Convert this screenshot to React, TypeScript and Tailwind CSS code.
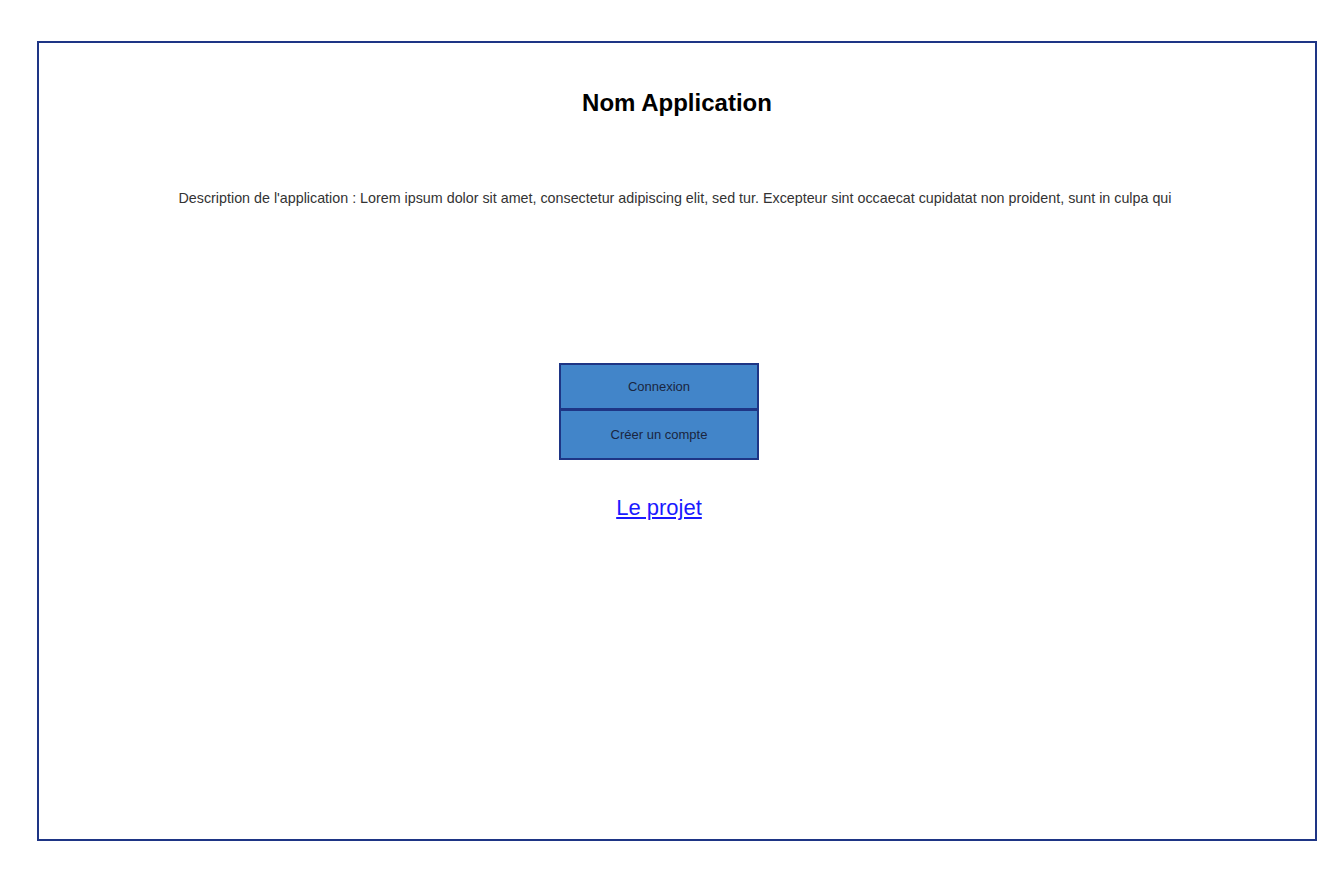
import React from "react";

export default function App() {
  return (
    <div className="min-h-[876px] bg-white pl-[37px] pt-[41px] font-['Liberation_Sans',Arial,sans-serif]">
      <div className="w-[1280px] h-[800px] border-2 border-[#1e3585] flex flex-col">
        {/* header */}
        <h1 className="mt-[46px] text-center text-[24px] leading-[28px] font-bold text-black">
          Nom Application
        </h1>
        <p className="mt-[73px] pr-[4px] text-center text-[14.3px] leading-[16px] text-[#333333]">
          Description de l'application : Lorem ipsum dolor sit amet, consectetur adipiscing elit, sed tur. Excepteur sint occaecat cupidatat non proident, sunt in culpa qui
        </p>

        {/* actions */}
        <div className="mt-[157px] flex flex-col items-center pr-[36px]">
          <button className="w-[200px] h-[47px] border-2 border-[#1e3585] bg-[#4285c9] text-[13px] text-[#1a2540]">
            Connexion
          </button>
          <button className="-mt-px w-[200px] h-[51px] border-2 border-[#1e3585] bg-[#4285c9] text-[13px] text-[#1a2540]">
            Créer un compte
          </button>
          <a
            href="#"
            className="mt-[35px] text-[22px] leading-[25px] text-[#1a1aff] underline"
          >
            Le projet
          </a>
        </div>
      </div>
    </div>
  );
}
